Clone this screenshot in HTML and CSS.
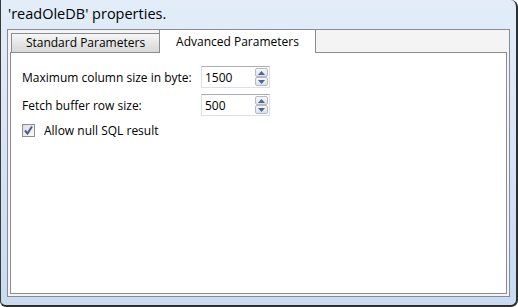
FILE: index.html
```html
<!DOCTYPE html>
<html lang="en">
<head>
    <meta charset="UTF-8">
    <title>readOleDB properties</title>
    <link rel="stylesheet" href="styles.css">
</head>
<body>
    <div class="window">
        <div class="title">'readOleDB' properties.</div>

        <div class="panel">
            <div class="tabs">
                <div class="tab">Standard Parameters</div>
                <div class="tab active">Advanced Parameters</div>
            </div>

            <div class="content">
                <div class="form">
                    <label class="label">Maximum column size in byte:</label>
                    <div class="spin">
                        <span class="value">1500</span>
                        <span class="arrows">
                            <span class="btn"><svg width="7" height="4" viewBox="0 0 7 4"><path d="M0 4 L3.5 0 L7 4 Z" fill="#4c6696"/></svg></span>
                            <span class="btn"><svg width="7" height="4" viewBox="0 0 7 4"><path d="M0 0 L3.5 4 L7 0 Z" fill="#4c6696"/></svg></span>
                        </span>
                    </div>

                    <label class="label">Fetch buffer row size:</label>
                    <div class="spin">
                        <span class="value">500</span>
                        <span class="arrows">
                            <span class="btn"><svg width="7" height="4" viewBox="0 0 7 4"><path d="M0 4 L3.5 0 L7 4 Z" fill="#4c6696"/></svg></span>
                            <span class="btn"><svg width="7" height="4" viewBox="0 0 7 4"><path d="M0 0 L3.5 4 L7 0 Z" fill="#4c6696"/></svg></span>
                        </span>
                    </div>
                </div>

                <div class="check">
                    <span class="box">
                        <svg width="11" height="11" viewBox="0 0 11 11"><path d="M2 5.5 L4.5 8.5 L9 1.5" fill="none" stroke="#4a5e94" stroke-width="2"/></svg>
                    </span>
                    <span>Allow null SQL result</span>
                </div>
            </div>
        </div>
    </div>
</body>
</html>
```

FILE: styles.css
```css
body { margin: 0; font-family: "Open Sans", "Noto Sans", sans-serif; font-size: 12px; color: #000; }

.window {
    width: 518px; height: 307px; box-sizing: border-box;
    border-left: 1px solid #3a3a3a; border-right: 2px solid #2e2e2e; border-bottom: 2px solid #2e2e2e;
    border-radius: 0 7px 7px 6px;
    background: linear-gradient(#e2edf9, #c8dbf1);
    padding: 0 6px 0 6px;
}

.title { height: 29px; line-height: 28px; font-size: 14.5px; padding-left: 1px; }

.panel {
    height: 268px; box-sizing: border-box;
    border: 1px solid #898c95; background: #f4f4f4;
    display: flex; flex-direction: column;
}

.tabs { display: flex; align-items: flex-end; margin-top: -1px; padding-left: 3px; height: 23px; }
.tab {
    height: 19px; box-sizing: border-box; padding: 0 12px;
    border: 1px solid #898c95; border-bottom: none; border-right: none;
    background: linear-gradient(#f7f7f7, #e3e3e3 60%, #d9d9d9);
    line-height: 18px; text-align: center; width: 148px;
}
.tab.active {
    height: 24px; margin-bottom: -1px; width: 157px;
    border-right: 1px solid #898c95; background: #fff; line-height: 24px;
    position: relative; z-index: 1;
}

.content {
    flex: 1; margin: 0 2px 2px 2px;
    border: 1px solid #898c95; background: #fff;
    padding: 13px 11px;
}

.form { display: grid; grid-template-columns: 179px 69px; row-gap: 6px; align-items: center; }
.spin {
    height: 22px; box-sizing: border-box;
    border: 1px solid #dbdfe6; border-top-color: #abadb3;
    display: flex; align-items: center; justify-content: space-between;
    padding: 0 1px 0 3px;
}
.arrows { display: flex; flex-direction: column; gap: 0; }
.btn {
    width: 13px; height: 9px; box-sizing: border-box;
    border: 1px solid #b5b9c2; border-radius: 2px;
    background: linear-gradient(#f6f7f9, #dde2ea);
    display: flex; align-items: center; justify-content: center;
}

.check { display: flex; align-items: center; gap: 9px; margin-top: 6px; }
.box {
    width: 13px; height: 13px; box-sizing: border-box;
    border: 1px solid #8e8f8f; background: linear-gradient(135deg, #dcdcdc, #fbfbfb);
    display: flex; align-items: center; justify-content: center;
}
```
